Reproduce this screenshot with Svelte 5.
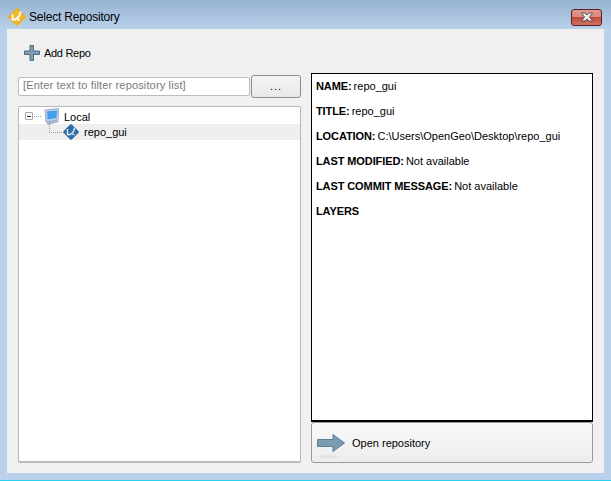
<script>
	const fields = [
		{ label: 'NAME:', value: 'repo_gui' },
		{ label: 'TITLE:', value: 'repo_gui' },
		{ label: 'LOCATION:', value: 'C:\\Users\\OpenGeo\\Desktop\\repo_gui' },
		{ label: 'LAST MODIFIED:', value: 'Not available' },
		{ label: 'LAST COMMIT MESSAGE:', value: 'Not available' },
		{ label: 'LAYERS', value: '' }
	];
</script>

<div class="window">
	<header class="titlebar">
		<svg class="app-icon" width="18" height="18" viewBox="0 0 18 18">
			<path d="M9 1 17 9 9 17 1 9Z" fill="#f2b92c" stroke="#eeb025" stroke-width="2" stroke-linejoin="round" />
			<path d="M4.500 6.500V11.500H8M12.500 3.500c0 3-1 5-4 7l3 2" fill="none" stroke="#fff" stroke-width="1.800" />
		</svg>
		<span class="title">Select Repository</span>
		<button class="close" aria-label="Close">
			<svg width="14" height="10" viewBox="0 0 14 10">
				<path d="M1.500 1H5L7 3 9 1h3.500L9.500 5l3 4H9L7 7 5 9H1.500l3-4Z" fill="#e9e9ee" stroke="#4a3a4a" stroke-width=".8" />
			</svg>
		</button>
	</header>

	<div class="client">
		<div class="toolbar">
			<svg width="16" height="16" viewBox="0 0 16 16">
				<path d="M6 .5h3.500v5.500h6v3.500h-6v6H6v-6H.5V6H6Z" fill="#7d9db3" stroke="#4f6b80" />
			</svg>
			<span class="add-label">Add Repo</span>
		</div>

		<div class="columns">
			<div class="left">
				<div class="filter-row">
					<input class="filter" placeholder="[Enter text to filter repository list]" />
					<button class="dots">...</button>
				</div>

				<div class="tree">
					<div class="tree-row">
						<span class="expander"></span>
						<span class="dots-h"></span>
						<svg class="node-icon" width="16" height="17" viewBox="0 0 16 17">
							<path d="M1 2 14.500 .5 14 12 2 14Z" fill="#c3cfe9" stroke="#8c9cc4" stroke-width=".8" />
							<path d="M3 3.500 13 2.500 12.500 10 3.500 11.500Z" fill="#3f9fe8" />
							<path d="M2 14l12-2 1 2-11 3Z" fill="#a7b4d4" />
						</svg>
						<span class="node-label">Local</span>
					</div>
					<div class="tree-row child">
						<span class="elbow"></span>
						<svg class="node-icon" width="16" height="16" viewBox="0 0 16 16">
							<path d="M8 1.500 14.500 8 8 14.500 1.500 8Z" fill="#2f6fa8" stroke="#2f6fa8" stroke-width="2.500" stroke-linejoin="round" />
							<path d="M4.500 5v5.500H8M11.500 3.500c0 3-1 4.500-3 6l3 1.500" fill="none" stroke="#e6eef6" stroke-width="1.300" />
						</svg>
						<span>repo_gui</span>
					</div>
				</div>
			</div>

			<div class="right">
				<div class="details">
					{#each fields as f}
						<p><b>{f.label}</b> {f.value}</p>
					{/each}
				</div>
				<button class="open">
					<span class="arrow">
						<svg width="28" height="18" viewBox="0 0 28 18">
							<path d="M.5 5.500h15.500V.5L27.500 9 16 17.500v-5H.5Z" fill="#7b9bb2" stroke="#5e7e96" />
						</svg>
					</span>
					<span>Open repository</span>
				</button>
			</div>
		</div>
	</div>
</div>

<style>
	:global(body) {
		margin: 0;
	}

	.window {
		width: 611px;
		height: 481px;
		box-sizing: border-box;
		display: flex;
		flex-direction: column;
		padding: 0 7px 7px;
		background: linear-gradient(#97b3d2, #b9d1ea 29px);
		border-bottom: 1px solid #2ad0ee;
		font-family: "Liberation Sans", Arial, sans-serif;
		font-size: 11px;
		color: #000;
	}

	.titlebar {
		height: 29px;
		box-sizing: border-box;
		padding-top: 5px;
		flex: none;
		display: flex;
		align-items: center;
	}
	.app-icon {
		margin-left: 1px;
	}
	.title {
		margin-left: 3px;
		font-size: 12px;
		letter-spacing: -0.2px;
	}
	.close {
		margin-left: auto;
		margin-right: 2px;
		width: 31px;
		height: 17px;
		padding: 0;
		display: flex;
		align-items: center;
		justify-content: center;
		border: 1px solid #5a1c2a;
		border-radius: 3px;
		background: linear-gradient(#dd9a8e, #d8897c 45%, #be4a38 50%, #cf7465);
	}

	.client {
		flex: 1;
		min-height: 0;
		background: #f0f0f0;
		display: flex;
		flex-direction: column;
		padding: 0 11px 10px;
	}

	.toolbar {
		height: 44px;
		flex: none;
		display: flex;
		align-items: center;
		gap: 4px;
		padding: 3px 0 0 6px;
		box-sizing: border-box;
	}
	.add-label {
		letter-spacing: -0.3px;
	}

	.columns {
		flex: 1;
		min-height: 0;
		display: flex;
		gap: 10px;
	}

	.left,
	.right {
		width: 282px;
		display: flex;
		flex-direction: column;
	}
	.left {
		width: 283px;
	}

	.filter-row {
		display: flex;
		align-items: center;
		gap: 1px;
		height: 24px;
		margin-top: 1px;
		margin-bottom: 8px;
		flex: none;
	}
	.filter {
		width: 232px;
		height: 19px;
		box-sizing: border-box;
		border: 1px solid #bcbcbc;
		border-radius: 2px;
		padding: 0 3px 2px 4px;
		font: inherit;
		letter-spacing: 0.15px;
	}
	.filter::placeholder {
		color: #7a7a7a;
		opacity: 1;
	}
	.dots {
		width: 50px;
		height: 23px;
		padding: 0;
		font: inherit;
		letter-spacing: 1px;
		border: 1px solid #8f8f8f;
		border-radius: 3px;
		background: linear-gradient(#f5f5f5, #e8e8e8);
	}

	.tree {
		flex: 1;
		min-height: 0;
		background: #fff;
		border: 1px solid #b9b9b9;
		border-bottom-width: 2px;
		border-radius: 2px;
		padding-top: 1px;
	}
	.tree-row {
		height: 16px;
		display: flex;
		align-items: center;
		padding-left: 6px;
	}
	.tree-row .node-icon {
		margin-right: 5px;
	}
	.node-label {
		margin: 2px 0 0 -1px;
	}
	.expander {
		width: 8px;
		height: 8px;
		box-sizing: border-box;
		border: 1px solid #a8a8a8;
		border-radius: 1px;
		flex: none;
		background: linear-gradient(#333, #333) center / 4px 1px no-repeat;
	}
	.dots-h {
		width: 7px;
		margin: 0 3px 0 1px;
		border-top: 1px dotted #999;
	}
	.child {
		background: #efefef;
		padding-left: 0;
	}
	.elbow {
		width: 12px;
		height: 9px;
		margin: -8px 1px 0 30px;
		border-left: 1px dotted #999;
		border-bottom: 1px dotted #999;
		flex: none;
	}

	.details {
		flex: 1;
		min-height: 0;
		box-sizing: border-box;
		background: #fff;
		border: 2px solid #000;
		border-width: 1px 1.500px 2px 1.500px;
		padding: 0 4px;
	}
	.details p {
		margin: 0;
		height: 25px;
		line-height: 24px;
		white-space: nowrap;
	}
	.details b {
		letter-spacing: -0.1px;
		margin-right: -1px;
	}

	.open {
		height: 41px;
		flex: none;
		display: flex;
		align-items: center;
		gap: 7px;
		padding: 0 5px;
		font: inherit;
		border: 1px solid #9a9a9a;
		border-radius: 3px;
		background: linear-gradient(#f9f9f9, #ececec);
	}
	.arrow {
		position: relative;
		display: flex;
	}
	/* faint reflection under the arrow */
	.arrow::after {
		content: '';
		position: absolute;
		left: 2px;
		right: 6px;
		bottom: -6px;
		height: 3px;
		border-radius: 50%;
		background: #e2e2e2;
	}
</style>
